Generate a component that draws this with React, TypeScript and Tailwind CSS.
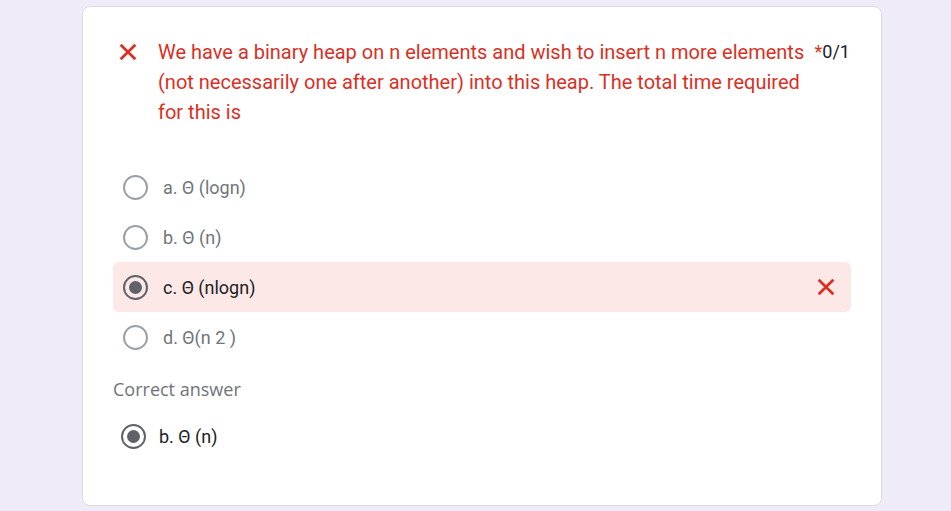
import React from "react";

type Opt = { label: string; selected?: boolean; wrong?: boolean };

const options: Opt[] = [
  { label: "a. Θ (logn)" },
  { label: "b. Θ (n)" },
  { label: "c. Θ (nlogn)", selected: true, wrong: true },
  { label: "d. Θ(n 2 )" },
];

function Cross({ size = 20 }: { size?: number }) {
  return (
    <svg width={size} height={size} viewBox="0 0 24 24" fill="none">
      <path d="M4 4L20 20M20 4L4 20" stroke="#d93025" strokeWidth="3" />
    </svg>
  );
}

function Radio({ checked }: { checked?: boolean }) {
  if (checked) {
    return (
      <div className="w-[25px] h-[25px] rounded-full border-2 border-[#5f6368] flex items-center justify-center shrink-0">
        <div className="w-[13px] h-[13px] rounded-full bg-[#5f6368]" />
      </div>
    );
  }
  return <div className="w-[25px] h-[25px] rounded-full border-2 border-[#9aa0a6] shrink-0" />;
}

export default function App() {
  return (
    <div className="min-h-[511px] bg-[#f0ebf8] pt-[6px] font-['Roboto',sans-serif]">
      <div className="ml-[82px] w-[800px] h-[500px] bg-white border border-[#dadce0] rounded-[8px] pt-[30px] px-[30px]">
        {/* question header */}
        <div className="flex items-start pl-[4px]">
          <div className="w-[22px] h-[30px] flex items-center shrink-0">
            <Cross size={22} />
          </div>
          <p className="ml-[19px] w-[657px] text-[20px] leading-[30px] text-[#d93025]">
            We have a binary heap on n elements and wish to insert n more elements (not necessarily one after another) into this heap. The total time required for this is
          </p>
          <div className="ml-auto mr-[1px] text-[18px] leading-[30px] text-[#202124]">
            <span className="text-[#d93025]">*</span>0/1
          </div>
        </div>

        {/* options */}
        <div className="mt-[35px] flex flex-col">
          {options.map((o) => (
            <div
              key={o.label}
              className={
                o.wrong
                  ? "h-[50px] flex items-center pl-[10px] pr-[14px] rounded-[6px] bg-[#fce8e6]"
                  : "h-[50px] flex items-center pl-[10px] pr-[14px]"
              }
            >
              <Radio checked={o.selected} />
              <span
                className={
                  o.selected
                    ? "ml-[15px] text-[18px] text-[#202124]"
                    : "ml-[15px] text-[18px] text-[#70757a]"
                }
              >
                {o.label}
              </span>
              {o.wrong && (
                <div className="ml-auto">
                  <Cross size={22} />
                </div>
              )}
            </div>
          ))}
        </div>

        {/* correct answer */}
        <div className="mt-[15px] text-[18px] leading-[24px] font-medium text-[#6f7378] font-['Open_Sans',sans-serif]">
          Correct answer
        </div>
        <div className="mt-[22px] flex items-center pl-[8px]">
          <Radio checked />
          <span className="ml-[13px] text-[18px] text-[#202124]">b. Θ (n)</span>
        </div>
      </div>
    </div>
  );
}
